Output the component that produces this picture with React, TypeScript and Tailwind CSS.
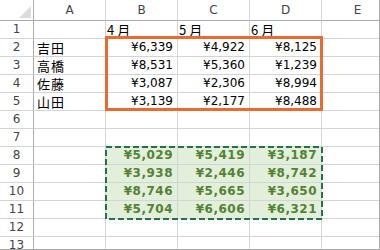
const cols = ["A", "B", "C", "D", "E"];

const sales = [
  { name: "吉田", v: ["¥6,339", "¥4,922", "¥8,125"] },
  { name: "高橋", v: ["¥8,531", "¥5,360", "¥1,239"] },
  { name: "佐藤", v: ["¥3,087", "¥2,306", "¥8,994"] },
  { name: "山田", v: ["¥3,139", "¥2,177", "¥8,488"] },
];

const pasted = [
  ["¥5,029", "¥5,419", "¥3,187"],
  ["¥3,938", "¥2,446", "¥8,742"],
  ["¥8,746", "¥5,665", "¥3,650"],
  ["¥5,704", "¥6,606", "¥6,321"],
];

const cell = "border-r border-b border-[#d4d4d4] whitespace-nowrap";
const rowHead =
  "border-r border-b border-r-[#ababab] border-b-[#d4d4d4] flex items-end justify-center pb-[1px] text-[12px] leading-[15px] text-[#444]";
const num = "flex items-end justify-end pr-[4px] pb-[1px] text-[12px] leading-[15px] text-black";
const green =
  "flex items-end justify-end pr-[4px] pb-[1px] text-[12px] leading-[15px] font-bold tracking-[0.5px] text-[#548235] bg-[#e2efda]";
const jp = "flex items-center text-[13px] leading-[15px] font-['Noto_Sans_CJK_JP',sans-serif]";

function RowHead({ n }: { n: number }) {
  return <div className={rowHead}>{n}</div>;
}

export default function App() {
  const rows: React.ReactNode[] = [];

  // row 1: month labels
  rows.push(
    <RowHead key="h1" n={1} />,
    <div key="a1" className={cell} />,
    <div key="b1" className={`${cell} ${jp} pl-[1px]`}>4 月</div>,
    <div key="c1" className={`${cell} ${jp} pl-[1px]`}>5 月</div>,
    <div key="d1" className={`${cell} ${jp} pl-[1px]`}>6 月</div>,
    <div key="e1" className={cell} />
  );

  sales.forEach((r, i) => {
    rows.push(
      <RowHead key={`h${i + 2}`} n={i + 2} />,
      <div key={`a${i + 2}`} className={`${cell} ${jp} pl-[3px] tracking-[1px]`}>
        {r.name}
      </div>,
      ...r.v.map((v, j) => (
        <div key={`v${i}${j}`} className={`${cell} ${num}`}>
          {v}
        </div>
      )),
      <div key={`e${i + 2}`} className={cell} />
    );
  });

  for (let n = 6; n <= 13; n++) {
    const g = n >= 8 && n <= 11 ? pasted[n - 8] : null;
    rows.push(<RowHead key={`h${n}`} n={n} />, <div key={`a${n}`} className={cell} />);
    if (g) {
      g.forEach((v, j) =>
        rows.push(
          <div key={`g${n}${j}`} className={`${cell} ${green}`}>
            {v}
          </div>
        )
      );
    } else {
      rows.push(
        <div key={`b${n}`} className={cell} />,
        <div key={`c${n}`} className={cell} />,
        <div key={`d${n}`} className={cell} />
      );
    }
    rows.push(<div key={`e${n}`} className={cell} />);
  }

  return (
    <div className="relative w-[380px] h-[250px] overflow-hidden bg-white border-r border-b border-[#ababab] font-['DejaVu_Sans',sans-serif]">
      <div className="grid grid-cols-[34px_72px_72px_72px_72px_72px] grid-rows-[21px_repeat(13,18px)] w-[394px]">
        {/* corner */}
        <div className="relative border-r border-b border-[#ababab]">
          <svg className="absolute left-[19px] top-[6px]" width="12" height="12" viewBox="0 0 12 12">
            <polygon points="12,0 12,12 0,12" fill="#dcdcdc" />
          </svg>
        </div>
        {cols.map((c) => (
          <div
            key={c}
            className="border-r border-b border-r-[#d4d4d4] border-b-[#ababab] flex items-center justify-center text-[12px] text-[#444]"
          >
            {c}
          </div>
        ))}
        {rows}
      </div>

      {/* copied range marker */}
      <div className="absolute left-[105px] top-[36px] w-[218px] h-[75px] border-[3px] border-[#ed6a2e] pointer-events-none" />

      {/* paste marquee */}
      <svg className="absolute left-[105px] top-[146px] pointer-events-none" width="218" height="74">
        <rect x="1" y="1" width="216" height="72" fill="none" stroke="#217346" strokeWidth="2" strokeDasharray="6 3" />
      </svg>
    </div>
  );
}
